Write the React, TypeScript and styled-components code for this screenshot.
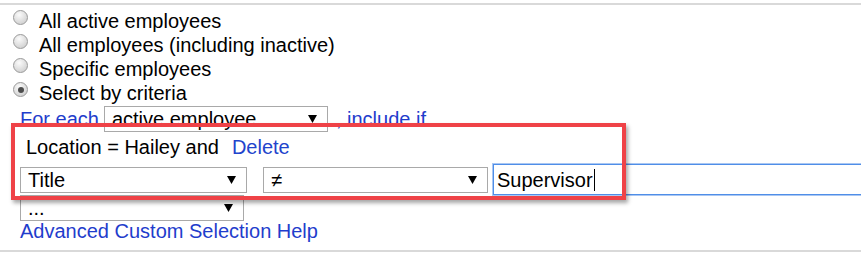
import React from "react";
import styled, { createGlobalStyle } from "styled-components";

const GlobalStyle = createGlobalStyle`
  html, body {
    margin: 0;
    padding: 0;
    background: #fff;
    overflow: hidden;
  }
  body {
    font-family: "Liberation Sans", Arial, sans-serif;
  }
`;

const Page = styled.div`
  position: relative;
  width: 861px;
  height: 258px;
  overflow: hidden;
  font-size: 20px;
  color: #000;
`;

const Rule = styled.div<{ $top: number }>`
  margin-top: ${(p) => p.$top}px;
  height: 2px;
  background: #d9d9d9;
`;

const Content = styled.div`
  padding: 4px 0 0 13px;
`;

const RadioList = styled.div`
  display: flex;
  flex-direction: column;
`;

const RadioRow = styled.label`
  display: flex;
  align-items: flex-start;
  height: 24px;
  line-height: 24px;
`;

const RadioDot = styled.span<{ $checked?: boolean }>`
  position: relative;
  box-sizing: border-box;
  width: 15px;
  height: 15px;
  margin: 1px 11px 0 0;
  border-radius: 50%;
  border: 1px solid #9a9a9a;
  background: radial-gradient(circle at 40% 30%, #fbfbfb, #d6d6d6 70%, #c8c8c8);
  flex-shrink: 0;

  &::after {
    content: "";
    display: ${(p) => (p.$checked ? "block" : "none")};
    position: absolute;
    left: 3.5px;
    top: 3.5px;
    width: 6px;
    height: 6px;
    border-radius: 50%;
    background: #4d4d4d;
  }
`;

const Indent = styled.div`
  margin-left: 7px;
`;

const EachRow = styled.div`
  display: flex;
  align-items: center;
  height: 28px;
  line-height: 24px;
  color: #1f3dcc;
`;

const Select = styled.div<{ $width: number }>`
  box-sizing: border-box;
  display: flex;
  align-items: center;
  justify-content: space-between;
  flex-shrink: 0;
  width: ${(p) => p.$width}px;
  height: 26px;
  padding: 0 10px 0 7px;
  border: 1px solid #a9a9a9;
  background: #fff;
  color: #000;
  line-height: 24px;
  white-space: nowrap;
  overflow: hidden;
`;

const Arrow = () => (
  <svg width="9" height="8" viewBox="0 0 9 8">
    <polygon points="0,0 9,0 4.5,8" fill="#000" />
  </svg>
);

const EachLabel = styled.span`
  margin-right: 5px;
`;

const IncludeLabel = styled.span`
  margin-left: 8px;
`;

const CriteriaLine = styled.div`
  margin-top: 2px;
  padding-left: 6px;
  height: 24px;
  line-height: 24px;
`;

const Link = styled.span<{ $gap?: number }>`
  color: #2244cc;
  margin-left: ${(p) => p.$gap ?? 0}px;
  cursor: pointer;
`;

const FieldRow = styled.div`
  display: flex;
  align-items: center;
  height: 31px;
  margin-top: 5px;
`;

const Spacer = styled.span<{ $w: number }>`
  width: ${(p) => p.$w}px;
  flex-shrink: 0;
`;

const TextBox = styled.div`
  box-sizing: border-box;
  display: flex;
  align-items: center;
  flex-shrink: 0;
  width: 420px;
  height: 31px;
  padding-left: 3px;
  border: 1px solid #4f8ee8;
  box-shadow: 0 0 0 1px #a9c7f3;
  line-height: 24px;
`;

const Caret = styled.span`
  width: 1px;
  height: 22px;
  margin-left: 1px;
  background: #000;
`;

const HelpLink = styled.div`
  line-height: 20px;
  height: 20px;
  color: #1f3dcc;
`;

const Highlight = styled.div`
  position: absolute;
  left: 11px;
  top: 123px;
  width: 615px;
  height: 77px;
  box-sizing: border-box;
  border: 4px solid #ef4247;
  box-shadow: 2px 3px 4px rgba(0, 0, 0, 0.35);
  pointer-events: none;
`;

const options = [
  { label: "All active employees", checked: false },
  { label: "All employees (including inactive)", checked: false },
  { label: "Specific employees", checked: false },
  { label: "Select by criteria", checked: true },
];

export default function App() {
  return (
    <Page>
      <GlobalStyle />
      <Rule $top={3} />
      <Content>
        <RadioList>
          {options.map((o) => (
            <RadioRow key={o.label}>
              <RadioDot $checked={o.checked} />
              {o.label}
            </RadioRow>
          ))}
        </RadioList>
        <Indent>
          <EachRow>
            <EachLabel>For each</EachLabel>
            <Select $width={224}>
              active employee
              <Arrow />
            </Select>
            <IncludeLabel>, include if</IncludeLabel>
          </EachRow>
          <CriteriaLine>
            Location = Hailey and<Link $gap={13}>Delete</Link>
          </CriteriaLine>
          <FieldRow>
            <Select $width={227}>
              Title
              <Arrow />
            </Select>
            <Spacer $w={16} />
            <Select $width={225}>
              ≠
              <Arrow />
            </Select>
            <Spacer $w={5} />
            <TextBox>
              Supervisor
              <Caret />
            </TextBox>
          </FieldRow>
          <Select $width={224}>
            ...
            <Arrow />
          </Select>
          <HelpLink>Advanced Custom Selection Help</HelpLink>
        </Indent>
      </Content>
      <Rule $top={9} />
      <Highlight />
    </Page>
  );
}
